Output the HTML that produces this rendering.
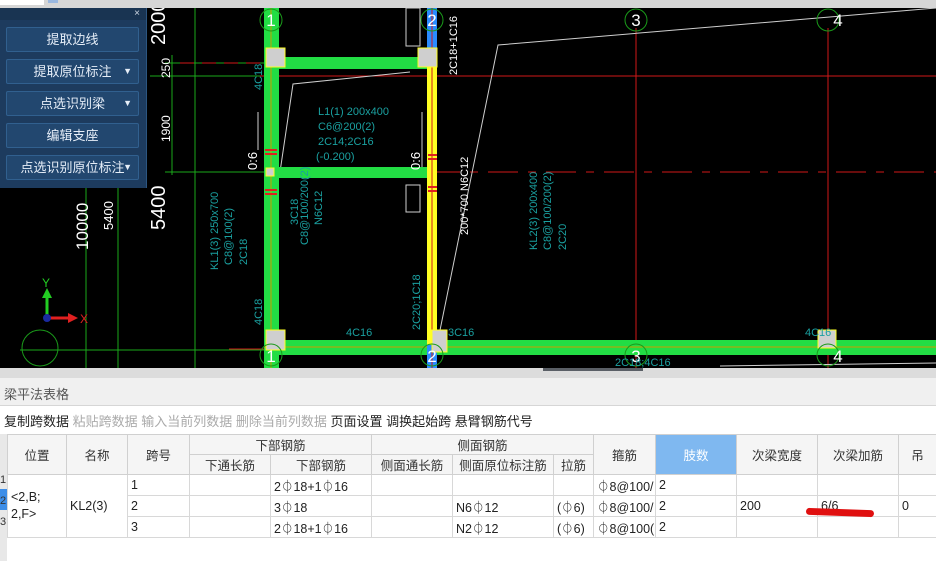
<!DOCTYPE html>
<html><head><meta charset="utf-8"><style>
*{margin:0;padding:0;box-sizing:border-box}
body{width:936px;height:561px;overflow:hidden;background:#fff;font-family:"Liberation Sans","Noto Sans CJK SC",sans-serif;position:relative}
.abs{position:absolute}
.btn{position:absolute;left:6px;width:133px;height:25px;background:#22476f;border:1px solid #31608f;border-radius:2px;color:#e6eef8;font-size:13px;line-height:23px;text-align:center}
.btn .ar{position:absolute;right:6px;top:0;font-size:9px}
table{border-collapse:collapse;table-layout:fixed;width:929px;position:absolute;left:7px;top:434px;font-size:12.5px;color:#222}
td{border:1px solid #d8d8d8;height:21px;padding:0 3px;white-space:nowrap;overflow:hidden}
th{border:1px solid #d0d0d0;font-weight:normal;background:#f5f5f5;height:17px;font-size:12.5px;color:#333;white-space:nowrap;overflow:hidden}
</style></head><body>
<div class="abs" style="left:0;top:0;width:936px;height:8px;background:#d6d6d6"></div>
<div class="abs" style="left:0;top:0;width:44px;height:5px;background:#fff"></div>
<div class="abs" style="left:48px;top:0;width:10px;height:3px;background:#9ab8e0"></div>
<svg class="abs" style="left:0;top:8px" width="936" height="360" viewBox="0 8 936 360">
<rect x="0" y="8" width="936" height="360" fill="#000"/>
<g stroke="#1aa81a" stroke-width="1">
<line x1="86" y1="8" x2="86" y2="368"/><line x1="118" y1="187" x2="118" y2="368"/>
<line x1="195" y1="8" x2="195" y2="368"/><line x1="172" y1="55" x2="172" y2="175"/>
<line x1="165" y1="63" x2="265" y2="63"/><line x1="150" y1="76" x2="265" y2="76"/><line x1="165" y1="172" x2="265" y2="172"/>
<line x1="20" y1="350" x2="265" y2="350"/>
</g>
<g stroke="#d01818" stroke-width="1">
<line x1="180" y1="63" x2="265" y2="63" stroke-dasharray="14,8"/>
<line x1="260" y1="76" x2="936" y2="76"/>
<line x1="430" y1="172" x2="936" y2="172" stroke-dasharray="30,10,8,10"/>
<line x1="229" y1="349" x2="265" y2="349"/>
<line x1="636" y1="28" x2="636" y2="368"/><line x1="828" y1="28" x2="828" y2="368"/>
<line x1="271" y1="8" x2="271" y2="368"/>
</g>
<g stroke="#cfcfcf" stroke-width="1" fill="none">
<polyline points="280,172 293,84 410,72"/>
<polyline points="437,345 498,45 936,8"/>
<line x1="258" y1="112" x2="258" y2="150"/><line x1="422" y1="112" x2="422" y2="175"/>
<rect x="406" y="185" width="14" height="27"/>
<rect x="406" y="8" width="14" height="38"/>
<line x1="720" y1="366" x2="936" y2="363"/>
</g>
<g fill="#22dd44">
<rect x="264" y="8" width="15" height="360"/>
<rect x="264" y="57" width="170" height="12"/>
<rect x="264" y="167" width="170" height="11"/>
<rect x="264" y="340" width="672" height="15"/>
</g>
<g stroke="#c8a000" stroke-width="1"><line x1="271" y1="8" x2="271" y2="368"/><line x1="264" y1="347" x2="936" y2="347"/></g>
<rect x="427" y="58" width="10" height="288" fill="#ffff22"/>
<rect x="427" y="8" width="10" height="50" fill="#2a8cff"/>
<rect x="427" y="345" width="10" height="23" fill="#2a8cff"/>
<line x1="432" y1="8" x2="432" y2="368" stroke="#d01818"/>
<g fill="#cfcfcf" stroke="#ffff22">
<rect x="266" y="48" width="19" height="19"/><rect x="418" y="48" width="19" height="19"/>
<rect x="266" y="330" width="19" height="20"/><rect x="432" y="330" width="15" height="22"/>
<rect x="818" y="330" width="18" height="18"/><rect x="266" y="168" width="8" height="8"/>
</g>
<g fill="#e02020"><rect x="265" y="149" width="12" height="2"/><rect x="265" y="153" width="12" height="2"/><rect x="265" y="189" width="12" height="2"/><rect x="265" y="193" width="12" height="2"/>
<rect x="428" y="154" width="9" height="2"/><rect x="428" y="158" width="9" height="2"/><rect x="428" y="186" width="9" height="2"/><rect x="428" y="190" width="9" height="2"/></g>
<g fill="none" stroke="#1a9a1a"><circle cx="271" cy="20" r="11"/><circle cx="432" cy="20" r="11"/><circle cx="636" cy="20" r="11"/><circle cx="828" cy="20" r="11"/>
<circle cx="271" cy="355" r="11"/><circle cx="432" cy="355" r="11"/><circle cx="636" cy="355" r="11"/><circle cx="828" cy="355" r="11"/>
<circle cx="40" cy="348" r="18"/></g>
<g fill="#fff" font-size="17" text-anchor="middle" font-family="Liberation Sans">
<text x="271" y="26">1</text><text x="432" y="26">2</text><text x="636" y="26">3</text><text x="838" y="26">4</text>
<text x="271" y="362">1</text><text x="432" y="362">2</text><text x="636" y="362">3</text><text x="838" y="362">4</text>
</g>
<g fill="#fff" font-size="20" font-family="Liberation Sans">
<text transform="translate(165,45) rotate(-90)">2000</text>
<text transform="translate(165,230) rotate(-90)">5400</text>
<text transform="translate(88,250) rotate(-90)" font-size="17">10000</text>
<text transform="translate(113,230) rotate(-90)" font-size="13">5400</text>
<text transform="translate(170,78) rotate(-90)" font-size="12">250</text>
<text transform="translate(170,142) rotate(-90)" font-size="12">1900</text>
<text transform="translate(257,170) rotate(-90)" font-size="13">0:6</text>
<text transform="translate(420,170) rotate(-90)" font-size="13">0:6</text>
<text transform="translate(457,75) rotate(-90)" font-size="11">2C18+1C16</text>
<text transform="translate(468,235) rotate(-90)" font-size="11">200*700 N6C12</text>
</g>
<g fill="#1aa0a0" font-size="11" font-family="Liberation Sans">
<text x="318" y="115">L1(1) 200x400</text><text x="318" y="130">C6@200(2)</text><text x="318" y="145">2C14;2C16</text><text x="316" y="160">(-0.200)</text>
<text transform="translate(218,270) rotate(-90)">KL1(3) 250x700</text>
<text transform="translate(232,265) rotate(-90)">C8@100(2)</text>
<text transform="translate(247,265) rotate(-90)">2C18</text>
<text transform="translate(298,225) rotate(-90)">3C18</text>
<text transform="translate(308,245) rotate(-90)">C8@100/200(2)</text>
<text transform="translate(322,225) rotate(-90)">N6C12</text>
<text transform="translate(537,250) rotate(-90)">KL2(3) 200x400</text>
<text transform="translate(551,250) rotate(-90)">C8@100/200(2)</text>
<text transform="translate(566,250) rotate(-90)">2C20</text>
<text transform="translate(262,90) rotate(-90)">4C18</text>
<text transform="translate(262,325) rotate(-90)">4C18</text>
<text transform="translate(420,330) rotate(-90)">2C20;1C18</text>
<text x="346" y="336">4C16</text><text x="448" y="336">3C16</text><text x="805" y="336">4C16</text><text x="615" y="366">2C18;4C16</text>
</g>
<line x1="47" y1="316" x2="47" y2="295" stroke="#22cc22" stroke-width="3"/>
<polygon points="42,298 47,288 52,298" fill="#22cc22"/>
<line x1="48" y1="318" x2="70" y2="318" stroke="#e02020" stroke-width="3"/>
<polygon points="68,313 78,318 68,323" fill="#e02020"/>
<circle cx="47" cy="318" r="4" fill="#1a2aa0"/>
<text x="42" y="287" fill="#22cc22" font-size="12">Y</text><text x="80" y="323" fill="#e02020" font-size="12">X</text>
</svg>
<div class="abs" style="left:0;top:8px;width:147px;height:180px;background:#1d3b5e;border-right:1px solid #2c5580">
<div style="height:12px;background:#193452;color:#cfd8e4;font-size:10px;text-align:right;padding-right:6px;line-height:12px">×</div>
</div>
<div class="btn" style="top:27px">提取边线</div>
<div class="btn" style="top:59px">提取原位标注<span class="ar">▼</span></div>
<div class="btn" style="top:91px">点选识别梁<span class="ar">▼</span></div>
<div class="btn" style="top:123px">编辑支座</div>
<div class="btn" style="top:155px">点选识别原位标注<span class="ar">▼</span></div>
<div class="abs" style="left:0;top:368px;width:936px;height:10px;background:#dcdcdc"></div>
<div class="abs" style="left:543px;top:368px;width:100px;height:3px;background:#5a5f66"></div>
<div class="abs" style="left:0;top:378px;width:936px;height:28px;background:#f0f0f0;border-bottom:1px solid #d6d6d6;font-size:13px;color:#555;line-height:34px;padding-left:4px">梁平法表格</div>
<div class="abs" style="left:4px;top:411px;font-size:13px;color:#222;white-space:nowrap">复制跨数据 <span style="color:#aaa">粘贴跨数据 输入当前列数据 删除当前列数据</span> 页面设置 调换起始跨 悬臂钢筋代号</div>
<div class="abs" style="left:0;top:434px;width:7px;height:127px;background:#e8e8e8"></div>
<div class="abs" style="left:0;top:489px;width:7px;height:21px;background:#3d8ee8"></div>
<div class="abs" style="left:0;top:470px;font-size:11px;color:#333;line-height:21px">1<br>2<br>3</div>
<table>
<colgroup><col style="width:59px"><col style="width:61px"><col style="width:62px"><col style="width:81px"><col style="width:101px"><col style="width:81px"><col style="width:101px"><col style="width:40px"><col style="width:62px"><col style="width:81px"><col style="width:81px"><col style="width:81px"><col style="width:38px"></colgroup>
<tr><th rowspan="2">位置</th><th rowspan="2">名称</th><th rowspan="2">跨号</th><th colspan="2">下部钢筋</th><th colspan="3">侧面钢筋</th><th rowspan="2">箍筋</th><th rowspan="2" style="background:#7fb8f0;color:#fff">肢数</th><th rowspan="2">次梁宽度</th><th rowspan="2">次梁加筋</th><th rowspan="2">吊</th></tr>
<tr><th>下通长筋</th><th>下部钢筋</th><th>侧面通长筋</th><th>侧面原位标注筋</th><th>拉筋</th></tr>
<tr><td rowspan="3" style="line-height:17px">&lt;2,B;<br>2,F&gt;</td><td rowspan="3">KL2(3)</td><td>1</td><td></td><td>2⏀18+1⏀16</td><td></td><td></td><td></td><td>⏀8@100/</td><td>2</td><td></td><td></td><td></td></tr>
<tr><td>2</td><td></td><td>3⏀18</td><td></td><td>N6⏀12</td><td>(⏀6)</td><td>⏀8@100/</td><td>2</td><td>200</td><td>6/6</td><td>0</td></tr>
<tr><td>3</td><td></td><td>2⏀18+1⏀16</td><td></td><td>N2⏀12</td><td>(⏀6)</td><td>⏀8@100(</td><td>2</td><td></td><td></td><td></td></tr>
</table>
<div class="abs" style="left:806px;top:509px;width:68px;height:7px;background:#e01010;border-radius:4px;transform:rotate(2deg)"></div>
</body></html>
